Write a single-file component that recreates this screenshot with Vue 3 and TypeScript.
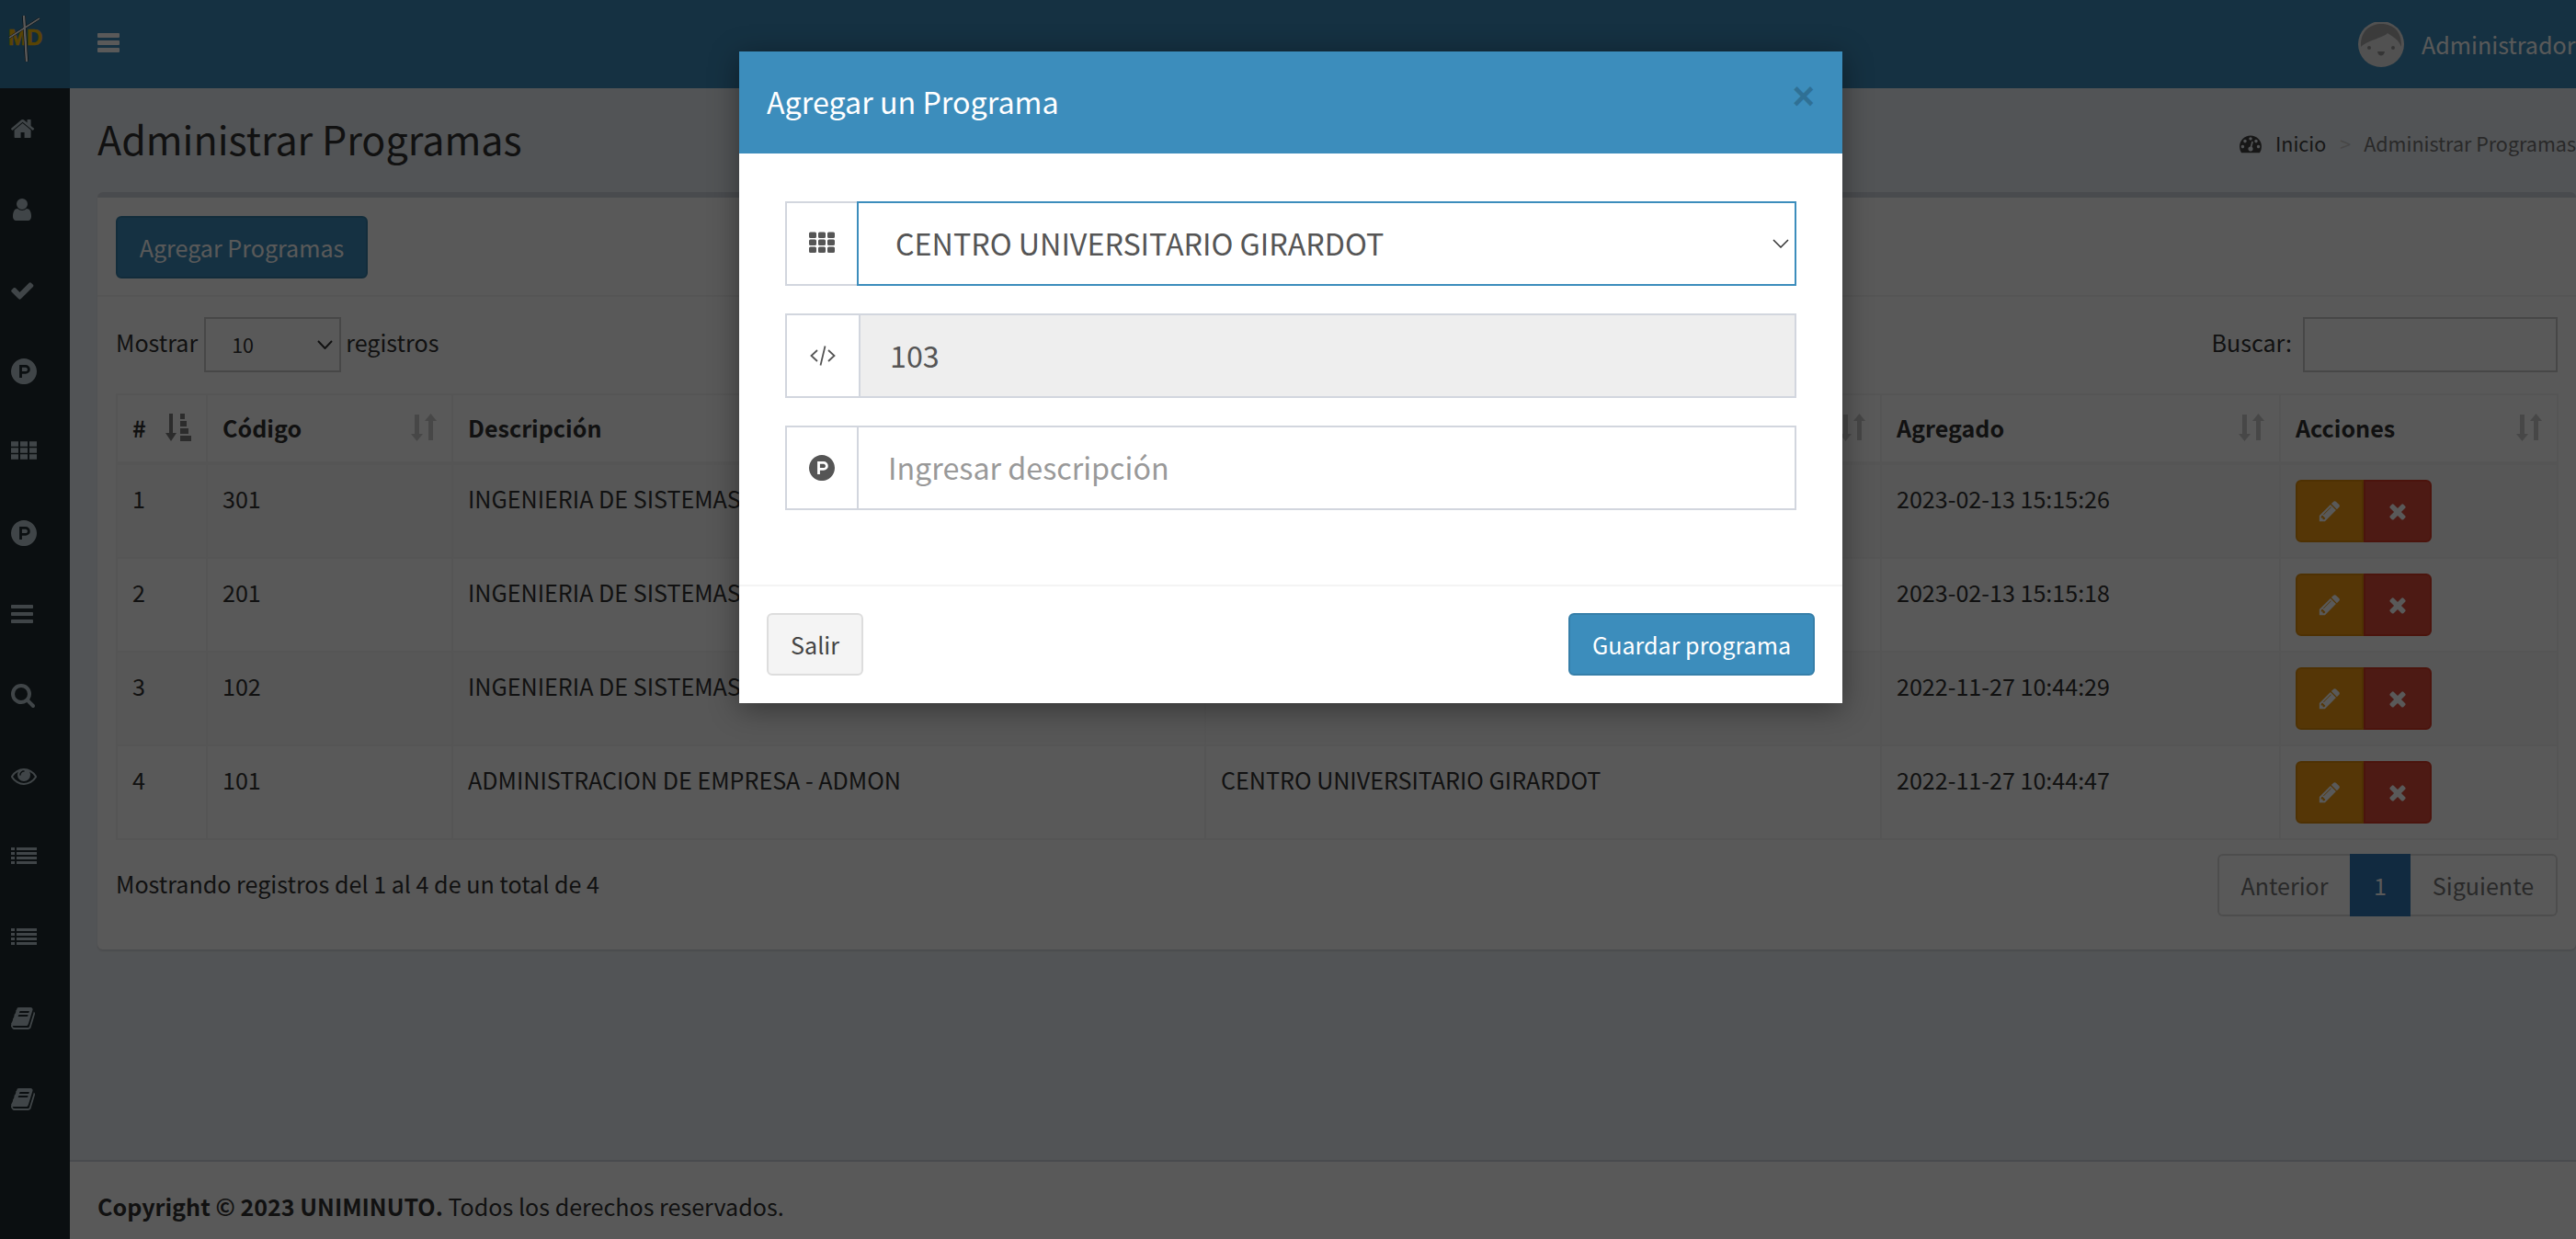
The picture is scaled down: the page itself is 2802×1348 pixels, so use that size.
<script setup lang="ts">
interface Icon { d: string; x: number; w: number }
const P = 'M1150 762q0 56-39.5 95t-95.5 39h-253v-269h253q56 0 95.5 39.5t39.5 95.5zm179 0q0-130-91.5-222t-222.5-92h-433v896h180v-269h253q130 0 222-91.5t92-221.5zm463 138q0 182-71 348t-191 286-286 191-348 71-348-71-286-191-191-286-71-348 71-348 191-286 286-191 348-71 348 71 286 191 191 286 71 348z'
const TH = 'M0 140h512v352h-512zM640 140h512v352h-512zM1280 140h512v352h-512zM0 592h512v352h-512zM640 592h512v352h-512zM1280 592h512v352h-512zM0 1044h512v352h-512zM640 1044h512v352h-512zM1280 1044h512v352h-512z'
const BARS = 'M1664 1344v128q0 26-19 45t-45 19h-1408q-26 0-45-19t-19-45v-128q0-26 19-45t45-19h1408q26 0 45 19t19 45zm0-512v128q0 26-19 45t-45 19h-1408q-26 0-45-19t-19-45v-128q0-26 19-45t45-19h1408q26 0 45 19t19 45zm0-512v128q0 26-19 45t-45 19h-1408q-26 0-45-19t-19-45v-128q0-26 19-45t45-19h1408q26 0 45 19t19 45z'
const LIST = 'M0 256h256v192h-256zM384 256h1408v192h-1408zM0 576h256v192h-256zM384 576h1408v192h-1408zM0 896h256v192h-256zM384 896h1408v192h-1408zM0 1216h256v192h-256zM384 1216h1408v192h-1408z'
const BOOK = 'M1703 478q40 57 18 129l-275 906q-19 64-76.5 107.5t-122.5 43.5h-923q-77 0-148.5-53.5t-99.5-131.5q-24-67-2-127 0-4 3-27t4-37q1-8-3-21.5t-3-19.5q2-11 8-21t16.5-23.5 16.5-23.5q23-38 45-91.5t30-91.5q3-10 .5-30t-.5-28q3-11 17-28t17-23q21-36 42-92t25-90q1-9-2.5-32t.5-28q4-13 22-30.5t22-22.5q19-26 42.5-84.5t27.5-96.5q1-8-3-25.5t-2-26.5q2-8 9-18t18-23 17-21q8-12 16.5-30.5t15-35 16-36 19.5-32 26.5-23.5 36-11.5 47.5 5.5l-1 3q38-9 51-9h761q74 0 114 56t18 130l-274 906q-36 119-71.5 153.5t-128.5 34.5h-869q-27 0-38 15-11 16-1 43 24 70 144 70h923q29 0 56-15.5t35-41.5l300-987q7-22 5-57 38 15 59 43zm-1064 2q-4 13 2 22.5t20 9.5h608q13 0 25.5-9.5t16.5-22.5l21-64q4-13-2-22.5t-20-9.5h-608q-13 0-25.5 9.5t-16.5 22.5zm-83 256q-4 13 2 22.5t20 9.5h608q13 0 25.5-9.5t16.5-22.5l21-64q4-13-2-22.5t-20-9.5h-608q-13 0-25.5 9.5t-16.5 22.5z'
const HOME = 'M1472 992v480q0 26-19 45t-45 19h-384v-384h-256v384h-384q-26 0-45-19t-19-45v-480q0-1 .5-3t.5-3l575-474 575 474q1 2 1 6zm223-69l-62 74q-8 9-21 11h-3q-13 0-21-7l-692-577-692 577q-12 8-24 7-13-2-21-11l-62-74q-8-10-7-23.5t11-21.5l719-599q32-26 76-26t76 26l244 204v-195q0-14 9-23t23-9h192q14 0 23 9t9 23v408l219 182q10 8 11 21.5t-7 23.5z'
const USER = 'M1536 1399q0 109-62.5 187t-150.5 78h-854q-88 0-150.5-78t-62.5-187q0-85 8.5-160.5t31.5-152 58.5-131 94-89 134.5-34.5q131 128 313 128t313-128q76 0 134.5 34.5t94 89 58.5 131 31.5 152 8.5 160.5zm-256-887q0 159-112.5 271.5t-271.5 112.5-271.5-112.5-112.5-271.5 112.5-271.5 271.5-112.5 271.5 112.5 112.5 271.5z'
const CHECK = 'M1671 566q0 40-28 68l-724 724-136 136q-28 28-68 28t-68-28l-136-136-362-362q-28-28-28-68t28-68l136-136q28-28 68-28t68 28l294 295 656-657q28-28 68-28t68 28l136 136q28 28 28 68z'
const SEARCH = 'M1216 832q0-185-131.5-316.5t-316.5-131.5-316.5 131.5-131.5 316.5 131.5 316.5 316.5 131.5 316.5-131.5 131.5-316.5zm512 832q0 52-38 90t-90 38q-54 0-90-38l-343-342q-179 124-399 124-143 0-273.5-55.5t-225-150-150-225-55.5-273.5 55.5-273.5 150-225 225-150 273.5-55.5 273.5 55.5 225 150 150 225 55.5 273.5q0 220-124 399l343 343q37 37 37 90z'
const EYE = 'M1664 960q-152-236-381-353 61 104 61 225 0 185-131.5 316.5t-316.5 131.5-316.5-131.5-131.5-316.5q0-121 61-225-229 117-381 353 133 205 333.5 326.5t434.5 121.5 434.5-121.5 333.5-326.5zm-720-384q0-20-14-34t-34-14q-125 0-214.5 89.5t-89.5 214.5q0 20 14 34t34 14 34-14 14-34q0-86 61-147t147-61q20 0 34-14t14-34zm848 384q0 34-20 69-140 230-376.5 368.5t-499.5 138.5-499.5-139-376.5-368q-20-35-20-69t20-69q140-229 376.5-368t499.5-139 499.5 139 376.5 368q20 35 20 69z'
const TIMES = 'M1490 1322q0 40-28 68l-136 136q-28 28-68 28t-68-28l-294-294-294 294q-28 28-68 28t-68-28l-136-136q-28-28-28-68t28-68l294-294-294-294q-28-28-28-68t28-68l136-136q28-28 68-28t68 28l294 294 294-294q28-28 68-28t68 28l136 136q28 28 28 68t-28 68l-294 294 294 294q28 28 28 68z'
const PENCIL = 'M491 1536l91-91-235-235-91 91v107h128v128h107zm523-928q0-22-22-22-10 0-17 7l-542 542q-7 7-7 17 0 22 22 22 10 0 17-7l542-542q7-7 7-17zm-54-192l416 416-832 832h-416v-416zm683 96q0 53-37 90l-166 166-416-416 166-165q36-38 90-38 53 0 91 38l235 234q37 39 37 91z'
const GAUGE = 'M384 1152q0-53-37.5-90.5t-90.5-37.5-90.5 37.5-37.5 90.5 37.5 90.5 90.5 37.5 90.5-37.5 37.5-90.5zm192-448q0-53-37.5-90.5t-90.5-37.5-90.5 37.5-37.5 90.5 37.5 90.5 90.5 37.5 90.5-37.5 37.5-90.5zm428 481l101-382q6-26-7.5-48.5t-38.5-29.5-48 6.5-30 39.5l-101 382q-60 5-107 43.5t-63 98.5q-20 77 20 146t117 89 146-20 89-117q16-60-6-117t-72-91zm660-33q0-53-37.5-90.5t-90.5-37.5-90.5 37.5-37.5 90.5 37.5 90.5 90.5 37.5 90.5-37.5 37.5-90.5zm-640-640q0-53-37.5-90.5t-90.5-37.5-90.5 37.5-37.5 90.5 37.5 90.5 90.5 37.5 90.5-37.5 37.5-90.5zm448 192q0-53-37.5-90.5t-90.5-37.5-90.5 37.5-37.5 90.5 37.5 90.5 90.5 37.5 90.5-37.5 37.5-90.5zm320 448q0 261-141 483-19 29-54 29h-1402q-35 0-54-29-141-221-141-483 0-182 71-348t191-286 286-191 348-71 348 71 286 191 191 286 71 348z'

const icon = (d: string, x: number, w: number): Icon => ({ d, x, w })
const menu: Icon[] = [
  icon(HOME, 90, 1664), icon(USER, 128, 1408), icon(CHECK, 110, 1664), icon(P, 0, 1792),
  icon(TH, 0, 1792), icon(P, 0, 1792), icon(BARS, 128, 1536), icon(SEARCH, 64, 1664),
  icon(EYE, 0, 1792), icon(LIST, 0, 1792), icon(LIST, 0, 1792), icon(BOOK, 64, 1664), icon(BOOK, 64, 1664)
]
const columns = [
  { label: '#', active: true },
  { label: 'Código', active: false },
  { label: 'Descripción', active: false },
  { label: 'Centro', active: false },
  { label: 'Agregado', active: false },
  { label: 'Acciones', active: false }
]
const rows = [
  { n: 1, code: '301', desc: 'INGENIERIA DE SISTEMAS - ISIS', center: 'CENTRO UNIVERSITARIO GIRARDOT', date: '2023-02-13 15:15:26' },
  { n: 2, code: '201', desc: 'INGENIERIA DE SISTEMAS - ISIS', center: 'CENTRO UNIVERSITARIO GIRARDOT', date: '2023-02-13 15:15:18' },
  { n: 3, code: '102', desc: 'INGENIERIA DE SISTEMAS - ISIS', center: 'CENTRO UNIVERSITARIO GIRARDOT', date: '2022-11-27 10:44:29' },
  { n: 4, code: '101', desc: 'ADMINISTRACION DE EMPRESA - ADMON', center: 'CENTRO UNIVERSITARIO GIRARDOT', date: '2022-11-27 10:44:47' }
]
</script>

<template>
  <div class="page">
    <header class="topbar">
      <div class="logo">
        <svg width="76" height="96" viewBox="0 0 76 96">
          <text x="9" y="49" class="logo-text">MD</text>
          <path d="M26 17 L29 67" stroke="#000" stroke-width="3.500" fill="none" />
          <path d="M10 41 L43 20" stroke="#000" stroke-width="2.500" fill="none" />
          <path d="M26 17 L29 67" stroke="#fff" stroke-width="2.500" fill="none" />
          <path d="M10 41 L43 20" stroke="#fff" stroke-width="1.800" fill="none" />
        </svg>
      </div>
      <div class="navbar">
        <div class="toggle"><span></span><span></span><span></span></div>
        <div class="user">
          <svg class="avatar" width="50" height="50" viewBox="0 0 50 50">
            <circle cx="25" cy="25" r="25" fill="#e9e9e9" />
            <path d="M3 28 C2 10 14 3 25 3 C37 3 48 10 47 28 C44 20 38 17 32 13 C28 18 12 20 3 28Z" fill="#a9a9a9" />
            <circle cx="12" cy="29" r="2" fill="#999" />
            <circle cx="38" cy="29" r="2" fill="#999" />
            <path d="M21 33 H29 C28 39 22 39 21 33Z" fill="#999" />
          </svg>
          <span class="user-name">Administrador</span>
        </div>
      </div>
    </header>

    <div class="main">
      <aside class="sidebar">
        <div v-for="(m, i) in menu" :key="i" class="menu-item">
          <svg :width="m.w / 64" height="28" :viewBox="`${m.x} 0 ${m.w} 1792`"><path :d="m.d" fill="currentColor" /></svg>
        </div>
      </aside>

      <div class="content">
        <section class="content-header">
          <h1>Administrar Programas</h1>
          <ol class="crumbs">
            <li class="crumb-home">
              <svg width="24" height="24" viewBox="0 0 1792 1792"><path :d="GAUGE" fill="currentColor" /></svg>
              <span>Inicio</span>
            </li>
            <li class="crumb-sep">&gt;</li>
            <li class="crumb-active">Administrar Programas</li>
          </ol>
        </section>

        <section class="box">
          <div class="box-header">
            <button class="btn btn-primary add">Agregar Programas</button>
          </div>
          <div class="box-body">
            <div class="table-tools">
              <label class="length">Mostrar
                <span class="length-select"><span>10</span>
                  <svg width="17" height="10" viewBox="0 0 17 10"><path d="M1 1 L8.5 9 L16 1" fill="none" stroke="#333" stroke-width="2" /></svg>
                </span>
                registros</label>
              <label class="search">Buscar: <input type="search" /></label>
            </div>

            <table class="data">
              <colgroup>
                <col class="c1" /><col class="c2" /><col class="c3" /><col class="c4" /><col class="c5" /><col class="c6" />
              </colgroup>
              <thead>
                <tr>
                  <th v-for="c in columns" :key="c.label">
                    <div class="th-in">
                      <span>{{ c.label }}</span>
                      <svg v-if="c.active" class="sort on" width="28" height="30" viewBox="0 0 28 30">
                        <path d="M4 0h4v21h4l-6 9-6-9h4z" /><path d="M16 0h5v6h-5zM16 8h7v6h-7zM16 16h9v6h-9zM16 24h12v6h-12z" />
                      </svg>
                      <svg v-else class="sort" width="28" height="30" viewBox="0 0 28 30">
                        <path d="M4 1h5v21h4l-6.500 8-6.500-8h4z" /><path d="M19 29h5v-21h4l-6.500-8-6.500 8h4z" />
                      </svg>
                    </div>
                  </th>
                </tr>
              </thead>
              <tbody>
                <tr v-for="r in rows" :key="r.n">
                  <td>{{ r.n }}</td>
                  <td>{{ r.code }}</td>
                  <td>{{ r.desc }}</td>
                  <td>{{ r.center }}</td>
                  <td>{{ r.date }}</td>
                  <td>
                    <div class="btn-group">
                      <button class="act warn"><svg width="26" height="26" viewBox="0 0 1792 1792"><path :d="PENCIL" fill="currentColor" /></svg></button>
                      <button class="act danger"><svg width="26" height="26" viewBox="0 0 1792 1792"><path :d="TIMES" fill="currentColor" /></svg></button>
                    </div>
                  </td>
                </tr>
              </tbody>
            </table>

            <div class="table-foot">
              <div class="info">Mostrando registros del 1 al 4 de un total de 4</div>
              <div class="pager">
                <span class="pg first">Anterior</span>
                <span class="pg cur">1</span>
                <span class="pg last">Siguiente</span>
              </div>
            </div>
          </div>
        </section>

        <footer class="footer"><strong>Copyright © 2023 UNIMINUTO.</strong> Todos los derechos reservados.</footer>
      </div>
    </div>

    <div class="backdrop"></div>

    <div class="modal">
      <div class="modal-head">
        <h4>Agregar un Programa</h4>
        <span class="close">×</span>
      </div>
      <div class="modal-body">
        <div class="group">
          <span class="addon">
            <svg width="28" height="28" viewBox="0 0 28 28"><path :d="'M0 3a1.500 1.500 0 0 1 1.500-1.500h5a1.500 1.500 0 0 1 1.500 1.500v3.500a1.500 1.500 0 0 1-1.500 1.500h-5a1.500 1.500 0 0 1-1.500-1.500zM10 3a1.500 1.500 0 0 1 1.500-1.500h5a1.500 1.500 0 0 1 1.500 1.500v3.500a1.500 1.500 0 0 1-1.500 1.500h-5a1.500 1.500 0 0 1-1.500-1.500zM20 3a1.500 1.500 0 0 1 1.500-1.500h5a1.500 1.500 0 0 1 1.500 1.500v3.500a1.500 1.500 0 0 1-1.500 1.500h-5a1.500 1.500 0 0 1-1.500-1.500zM0 11a1.500 1.500 0 0 1 1.500-1.500h5a1.500 1.500 0 0 1 1.500 1.500v3.500a1.500 1.500 0 0 1-1.500 1.500h-5a1.500 1.500 0 0 1-1.500-1.500zM10 11a1.500 1.500 0 0 1 1.500-1.500h5a1.500 1.500 0 0 1 1.500 1.500v3.500a1.500 1.500 0 0 1-1.500 1.500h-5a1.500 1.500 0 0 1-1.500-1.500zM20 11a1.500 1.500 0 0 1 1.500-1.500h5a1.500 1.500 0 0 1 1.500 1.500v3.500a1.500 1.500 0 0 1-1.500 1.500h-5a1.500 1.500 0 0 1-1.500-1.500zM0 19a1.500 1.500 0 0 1 1.500-1.500h5a1.500 1.500 0 0 1 1.500 1.500v3.500a1.500 1.500 0 0 1-1.500 1.500h-5a1.500 1.500 0 0 1-1.500-1.500zM10 19a1.500 1.500 0 0 1 1.500-1.500h5a1.500 1.500 0 0 1 1.500 1.500v3.500a1.500 1.500 0 0 1-1.500 1.500h-5a1.500 1.500 0 0 1-1.500-1.500zM20 19a1.500 1.500 0 0 1 1.500-1.500h5a1.500 1.500 0 0 1 1.500 1.500v3.500a1.500 1.500 0 0 1-1.500 1.500h-5a1.500 1.500 0 0 1-1.500-1.500z'" fill="currentColor" /></svg>
          </span>
          <div class="select-wrap">
            <select class="field select"><option>CENTRO UNIVERSITARIO GIRARDOT</option></select>
            <svg class="chev" width="18" height="10" viewBox="0 0 18 10"><path d="M1 1 L9 9 L17 1" fill="none" stroke="#333" stroke-width="1.500" /></svg>
          </div>
        </div>
        <div class="group">
          <span class="addon wide">
            <svg width="28" height="22" viewBox="0 0 28 22"><path d="M8 5 L1.500 11 L8 17 M20 5 L26.500 11 L20 17 M16.500 0.500 L11.500 21.500" fill="none" stroke="currentColor" stroke-width="1.800" /></svg>
          </span>
          <input class="field readonly" value="103" readonly />
        </div>
        <div class="group">
          <span class="addon">
            <svg width="28" height="28" viewBox="0 0 1792 1792"><path :d="P" fill="currentColor" /></svg>
          </span>
          <input class="field" placeholder="Ingresar descripción" />
        </div>
      </div>
      <div class="modal-foot">
        <button class="btn btn-default">Salir</button>
        <button class="btn btn-primary save">Guardar programa</button>
      </div>
    </div>
  </div>
</template>

<style>
html, body { margin: 0; overflow: hidden; }
</style>

<style scoped>
.page {
  position: relative;
  width: 2802px;
  height: 1348px;
  overflow: hidden;
  font-family: "Noto Sans CJK SC", "Source Sans Pro", "Noto Sans", sans-serif;
  font-size: 25.1px;
  line-height: 40px;
  color: #333;
  background: #ecf0f5;
}
button, input, select { font-family: inherit; }

/* top bar */
.topbar { display: flex; height: 96px; background: #3c8dbc; }
.logo { width: 76px; height: 96px; background: #367fa9; flex: none; }
.logo-text { font-family: "Liberation Sans", sans-serif; font-weight: 700; font-size: 24px; fill: #ffc20e; stroke: #ffc20e; stroke-width: .5; }
.navbar { flex: 1; display: flex; justify-content: space-between; align-items: center; min-width: 0; }
.toggle { margin-left: 30px; display: flex; flex-direction: column; gap: 3px; margin-top: -3px; }
.toggle span { display: block; width: 24px; height: 5px; border-radius: 1px; background: #fff; }
.user { width: 237px; flex: none; display: flex; align-items: center; gap: 19px; overflow: hidden; white-space: nowrap; }
.avatar { flex: none; margin-top: -1px; }
.user-name { color: #fff; }

/* layout */
.main { display: flex; height: 1252px; }
.sidebar { width: 76px; flex: none; background: #222d32; color: #b8c7ce; }
.menu-item { height: 88px; padding-left: 12px; display: flex; align-items: center; }
.content { flex: 1; min-width: 0; display: flex; flex-direction: column; }

.content-header { height: 113px; flex: none; display: flex; justify-content: space-between; align-items: center; padding-left: 30px; box-sizing: border-box; }
.content-header h1 { margin: 0; font-size: 43px; line-height: 60px; font-weight: 400; margin-top: -6px; }
.crumbs { list-style: none; margin: 6px 0 0; padding: 0; width: 366px; flex: none; display: flex; align-items: center; font-size: 21.5px; line-height: 34px; white-space: nowrap; }
.crumb-home { display: flex; align-items: center; gap: 15px; color: #444; }
.crumb-sep { color: #ccc; margin: 0 14px 0 15px; }
.crumb-active { color: #777; }

/* box */
.box { margin-left: 30px; height: 824px; box-sizing: border-box; flex: none; background: #fff; border-top: 6px solid #d2d6de; border-radius: 6px; box-shadow: 0 2px 2px rgba(0,0,0,.1); }
.box-header { height: 108px; box-sizing: border-box; padding: 20px; border-bottom: 2px solid #f4f4f4; }
.box-body { padding: 20px; padding-right: 20px; }

.btn { height: 68px; box-sizing: border-box; border-radius: 6px; font-size: 25.1px; line-height: 40px; border: 2px solid transparent; padding: 0 26px; }
.btn-primary { background: #3c8dbc; border-color: #367fa9; color: #fff; }
.btn-default { background: #f4f4f4; border-color: #ddd; color: #444; }
.add { width: 274px; padding: 0; }

.table-tools { display: flex; justify-content: space-between; height: 60px; margin-top: 2px; margin-bottom: 23px; }
.length, .search { display: flex; align-items: flex-start; line-height: 54px; gap: 7px; }
.length-select { width: 149px; height: 60px; box-sizing: border-box; border: 2px solid #ccc; display: flex; align-items: center; justify-content: space-between; padding: 0 7px 0 28px; font-size: 21.5px; margin-right: -2px; }
.search { gap: 12px; }
.search input { width: 277px; height: 60px; box-sizing: border-box; border: 2px solid #ccc; background: #fff; outline: none; }

.data { width: 2655px; table-layout: fixed; border-collapse: collapse; border: 2px solid #f4f4f4; }
.c1 { width: 98px; } .c2 { width: 267px; } .c3 { width: 819px; } .c4 { width: 735px; } .c5 { width: 434px; } .c6 { width: 302px; }
.data th, .data td { border: 2px solid #f4f4f4; padding: 16px; text-align: left; vertical-align: top; font-weight: 400; }
.data th { font-weight: 700; border-bottom-width: 4px; height: 40px; box-sizing: content-box; padding: 15px 16px 17px 16px; }
.data td { padding-left: 16px; white-space: nowrap; overflow: hidden; }
.data tbody tr:nth-child(odd) { background: #f9f9f9; }
.th-in { display: flex; justify-content: space-between; align-items: center; }
.sort { fill: #000; opacity: .2; flex: none; }
.sort.on { opacity: .5; }

.btn-group { display: flex; width: 148px; }
.act { width: 74px; height: 68px; box-sizing: border-box; border: 2px solid; padding: 0; color: #fff; display: flex; align-items: center; justify-content: center; }
.warn { background: #f39c12; border-color: #e08e0b; border-radius: 6px 0 0 6px; }
.danger { background: #dd4b39; border-color: #d73925; border-radius: 0 6px 6px 0; }

.table-foot { display: flex; justify-content: space-between; align-items: flex-start; margin-top: 15px; }
.info { padding-top: 12px; }
.pager { display: flex; height: 68px; }
.pg { box-sizing: border-box; height: 68px; display: flex; align-items: center; justify-content: center; border: 2px solid #ddd; color: #777; }
.first { width: 144px; border-right: none; border-radius: 6px 0 0 6px; }
.cur { width: 66px; background: #337ab7; border-color: #337ab7; color: #fff; }
.last { width: 160px; border-left: none; border-radius: 0 6px 6px 0; }

.footer { margin-top: auto; height: 86px; box-sizing: border-box; background: #fff; border-top: 2px solid #d2d6de; padding: 28px 30px 0; white-space: nowrap; }

/* overlay */
.backdrop { position: absolute; inset: 0; background: rgba(0, 0, 0, .65); }
.modal { position: absolute; left: 804px; top: 56px; width: 1200px; height: 709px; background: #fff; box-shadow: 0 6px 30px rgba(0,0,0,.4); display: flex; flex-direction: column; }
.modal-head { height: 111px; flex: none; background: #3c8dbc; color: #fff; display: flex; justify-content: space-between; padding: 30px; box-sizing: border-box; }
.modal-head h4 { margin: 0; font-size: 32.25px; line-height: 49px; font-weight: 400; }
.close { font-family: "Liberation Sans", sans-serif; font-size: 42px; font-weight: 700; line-height: 42px; color: #000; opacity: .2; margin-top: -2px; }
.modal-body { flex: 1; padding: 52px 50px 0; display: flex; flex-direction: column; gap: 30px; box-sizing: border-box; }
.group { display: flex; height: 92px; }
.addon { width: 78px; flex: none; box-sizing: border-box; border: 2px solid #d2d6de; border-right: none; display: flex; align-items: center; justify-content: center; color: #555; }
.addon.wide { width: 80px; }
.field { flex: 1; min-width: 0; height: 92px; box-sizing: border-box; border: 2px solid #d2d6de; padding: 0 32px 2px; font-size: 32.25px; color: #555; background: #fff; outline: none; border-radius: 0; }
.field::placeholder { color: #999; opacity: 1; }
.readonly { background: #eee; }
.select-wrap { flex: 1; position: relative; display: flex; min-width: 0; }
.select { width: 100%; appearance: none; border-color: #3c8dbc; padding-left: 40px; }
.chev { position: absolute; right: 8px; top: 41px; pointer-events: none; }
.modal-foot { height: 129px; flex: none; box-sizing: border-box; border-top: 2px solid #f4f4f4; padding: 29px 30px 0; display: flex; justify-content: space-between; align-items: flex-start; }
.btn-default { width: 105px; padding: 0; }
.save { width: 268px; padding: 0; }
</style>
